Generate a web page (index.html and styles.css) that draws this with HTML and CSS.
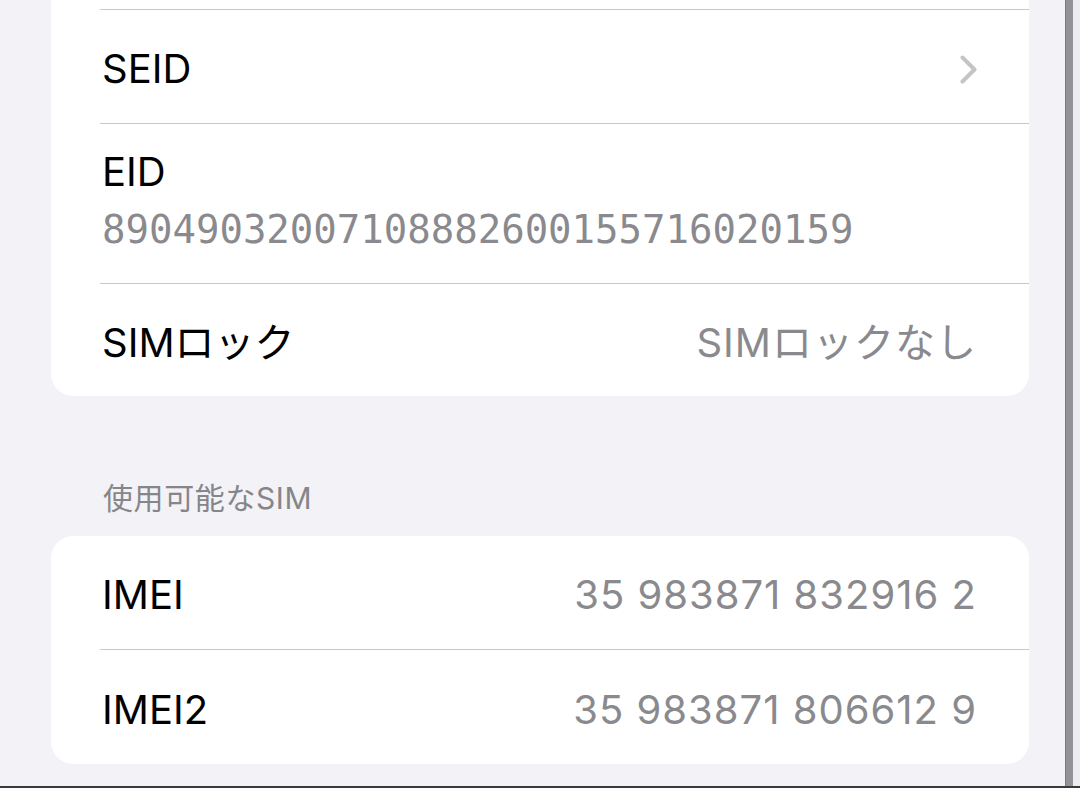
FILE: index.html
```html
<!DOCTYPE html>
<html lang="ja">
<head>
  <meta charset="utf-8">
  <title>情報</title>
  <link rel="stylesheet" href="styles.css">
</head>
<body>
  <div class="device">
    <div class="screen">

      <!-- upper group, scrolled so its top is cut off -->
      <div class="group group-cut">
        <div class="row row-cut"></div>
        <div class="row">
          <span class="label">SEID</span>
          <svg class="chevron" width="17" height="29" viewBox="0 0 17 29">
            <path d="M2.5 2.5 L14.5 14.5 L2.5 26.5" fill="none" stroke="#c4c4c7" stroke-width="4" stroke-linecap="round" stroke-linejoin="round"/>
          </svg>
        </div>
        <div class="row row-stack">
          <span class="label">EID</span>
          <span class="mono">89049032007108882600155716020159</span>
        </div>
        <div class="row">
          <span class="label">SIMロック</span>
          <span class="value">SIMロックなし</span>
        </div>
      </div>

      <div class="section-title">使用可能なSIM</div>

      <div class="group">
        <div class="row">
          <span class="label">IMEI</span>
          <span class="value">35 983871 832916 2</span>
        </div>
        <div class="row">
          <span class="label">IMEI2</span>
          <span class="value">35 983871 806612 9</span>
        </div>
      </div>

    </div>
    <div class="frame-edge"></div>
    <div class="frame-gutter"></div>
  </div>
  <div class="frame-bottom"></div>
</body>
</html>
```

FILE: styles.css
```css
html,
body {
  margin: 0;
  padding: 0;
}

body {
  background-color: #F2F2F7;
  font-family: Inter, "Noto Sans CJK JP", sans-serif;
  color: #000000;
  width: 1080px;
  height: 788px;
  overflow: hidden;
}

.device {
  display: flex;
  height: 786px;
}

.screen {
  flex: 1;
  padding: 0 36px 0 51px;
  background-color: #F2F2F7;
}

.frame-edge {
  width: 7px;
  background-color: #929297;
  border-left: 1px solid #7c7c80;
}

.frame-gutter {
  width: 7px;
  background-color: #EDEDF1;
}

.frame-bottom {
  height: 2px;
  background-color: #3a3a3c;
}

.group {
  background-color: #FFFFFF;
  border-radius: 22px;
  overflow: hidden;
}

.group-cut {
  border-radius: 0 0 22px 22px;
}

.row {
  box-sizing: border-box;
  height: 114px;
  margin-left: 49px;
  padding: 5px 52px 0 2px;
  display: flex;
  align-items: center;
  justify-content: space-between;
  border-bottom: 1px solid #C8C8CA;
}

.row:last-child {
  border-bottom: none;
  height: 112px;
}

.group .row:nth-child(2):last-child {
  height: 114px;
}

.row-cut {
  height: 10px;
  padding: 0;
}

.row-stack {
  height: 160px;
  flex-direction: column;
  align-items: flex-start;
  justify-content: flex-start;
  padding-top: 24px;
}

.label {
  font-size: 40px;
  line-height: 48px;
}

.value {
  font-size: 40px;
  line-height: 48px;
  letter-spacing: 1px;
  color: #8A8A8E;
}

.mono {
  font-family: "DejaVu Sans Mono", monospace;
  font-size: 39px;
  margin-top: 11px;
  color: #8A8A8E;
}

.chevron {
  display: block;
}

.section-title {
  font-size: 30px;
  letter-spacing: 0.6px;
  color: #86868A;
  padding: 83px 0 18px 52px;
  line-height: 39px;
}
```
